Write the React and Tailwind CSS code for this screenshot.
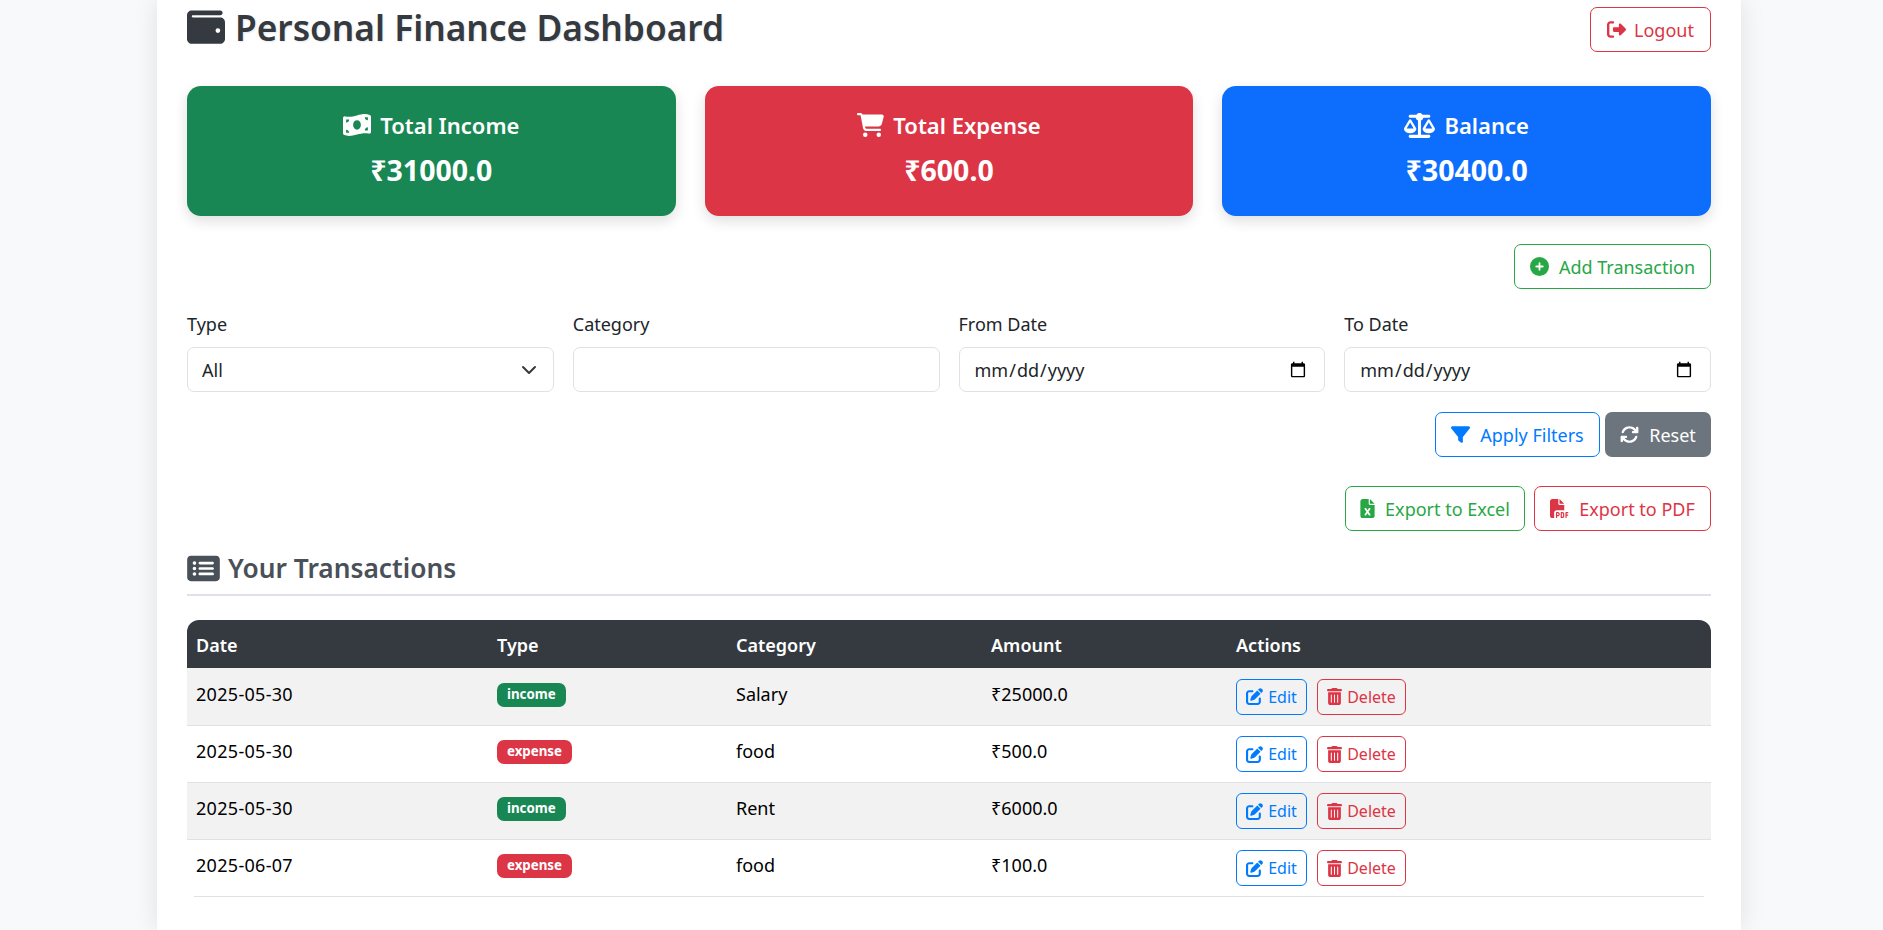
import {
  FaWallet,
  FaMoneyBillWave,
  FaCartShopping,
  FaScaleBalanced,
  FaRightFromBracket,
  FaCirclePlus,
  FaFilter,
  FaArrowsRotate,
  FaFileExcel,
  FaFilePdf,
  FaRectangleList,
  FaPenToSquare,
  FaTrashCan,
} from "react-icons/fa6";

const transacciones = [
  { fecha: "2025-05-30", tipo: "income", categoria: "Salary", monto: "₹25000.0" },
  { fecha: "2025-05-30", tipo: "expense", categoria: "food", monto: "₹500.0" },
  { fecha: "2025-05-30", tipo: "income", categoria: "Rent", monto: "₹6000.0" },
  { fecha: "2025-06-07", tipo: "expense", categoria: "food", monto: "₹100.0" },
];

function SummaryCard({ icon, title, value, color }) {
  return (
    <div className={`${color} h-[130px] rounded-[14px] shadow-[0_5px_14px_rgba(0,0,0,0.13)] text-white flex flex-col items-center pt-[23px]`}>
      <div className="flex items-center gap-[9px] text-[22px] font-semibold leading-[32px]">
        {icon}
        <span>{title}</span>
      </div>
      <div className="text-[28.5px] font-bold leading-[40px] mt-[9px]">{value}</div>
    </div>
  );
}

function Field({ label, children }) {
  return (
    <div>
      <label className="block text-[18px] leading-[28px] mb-[7px] -mt-[2px] pb-[2px] text-[#212529]">{label}</label>
      {children}
    </div>
  );
}

function OutlineButton({ className, icon, children }) {
  return (
    <button className={`${className} h-[45px] flex items-center justify-center border rounded-[7px] bg-white text-[18px]`}>
      {icon}
      <span className="relative top-[1px]">{children}</span>
    </button>
  );
}

function App() {
  const inputClass = "w-full h-[45px] border border-[#dee2e6] rounded-[7px] pl-[14px] pr-[15px] pt-[1px] text-[18px] text-[#212529] bg-white outline-none";

  return (
    <div className="h-[930px] overflow-hidden bg-[#f8f9fa] font-['Noto_Sans',sans-serif]">
      <div className="w-[1584px] h-[930px] ml-[157px] bg-white px-[30px] pt-[7px] shadow-[0_0_24px_rgba(0,0,0,0.1)]">
        {/* Encabezado */}
        <div className="flex justify-between items-start h-[45px] mb-[34px]">
          <h1 className="flex items-center gap-[10px] text-[35.3px] font-semibold leading-[40px] text-[#343a40] [text-shadow:1px_1px_2px_rgba(0,0,0,0.1)]">
            <FaWallet className="w-[38px] h-[38px]" />
            Personal Finance Dashboard
          </h1>
          <OutlineButton
            className="w-[121px] gap-[8px] border-[#dc3545] text-[#dc3545]"
            icon={<FaRightFromBracket className="w-[19px] h-[19px]" />}
          >
            Logout
          </OutlineButton>
        </div>

        {/* Resumen */}
        <div className="grid grid-cols-3 gap-x-[29px]">
          <SummaryCard color="bg-[#198754]" title="Total Income" value="₹31000.0" icon={<FaMoneyBillWave className="w-[28px] h-[28px]" />} />
          <SummaryCard color="bg-[#dc3545]" title="Total Expense" value="₹600.0" icon={<FaCartShopping className="w-[27px] h-[24px]" />} />
          <SummaryCard color="bg-[#0d6efd]" title="Balance" value="₹30400.0" icon={<FaScaleBalanced className="w-[31px] h-[25px]" />} />
        </div>

        <div className="flex justify-end mt-[28px]">
          <OutlineButton
            className="w-[197px] gap-[10px] border-[#28a745] text-[#28a745]"
            icon={<FaCirclePlus className="w-[19px] h-[19px]" />}
          >
            Add Transaction
          </OutlineButton>
        </div>

        {/* Filtros */}
        <div className="grid grid-cols-4 gap-x-[19px] mt-[23px]">
          <Field label="Type">
            <div className="relative">
              <select className={`${inputClass} appearance-none`}>
                <option>All</option>
              </select>
              <svg className="absolute right-[17px] top-[15px] w-[16px] h-[16px] pointer-events-none" viewBox="0 0 16 16" fill="none">
                <path d="m2 5 6 6 6-6" stroke="#343a40" strokeWidth="2" strokeLinecap="round" strokeLinejoin="round" />
              </svg>
            </div>
          </Field>
          <Field label="Category">
            <input type="text" className={inputClass} />
          </Field>
          <Field label="From Date">
            <input type="date" className={inputClass} />
          </Field>
          <Field label="To Date">
            <input type="date" className={inputClass} />
          </Field>
        </div>

        <div className="flex justify-end gap-[5px] mt-[20px]">
          <OutlineButton
            className="w-[165px] gap-[10px] border-[#007bff] text-[#007bff]"
            icon={<FaFilter className="w-[19px] h-[19px]" />}
          >
            Apply Filters
          </OutlineButton>
          <button className="w-[106px] h-[45px] flex items-center justify-center gap-[10px] rounded-[7px] bg-[#6c757d] text-white text-[18px]">
            <FaArrowsRotate className="w-[19px] h-[19px]" />
            <span className="relative top-[1px]">Reset</span>
          </button>
        </div>

        <div className="flex justify-end gap-[9px] mt-[29px]">
          <OutlineButton
            className="w-[180px] gap-[10px] border-[#28a745] text-[#28a745]"
            icon={<FaFileExcel className="w-[15px] h-[19px]" />}
          >
            Export to Excel
          </OutlineButton>
          <OutlineButton
            className="w-[177px] gap-[10px] border-[#dc3545] text-[#dc3545]"
            icon={<FaFilePdf className="w-[19px] h-[19px]" />}
          >
            Export to PDF
          </OutlineButton>
        </div>

        {/* Tabla */}
        <h2 className="flex items-center gap-[8px] h-[65px] pt-[12px] border-b-2 border-[#dee2e6] text-[26.3px] font-semibold text-[#495057]">
          <FaRectangleList className="w-[33px] h-[29px]" />
          Your Transactions
        </h2>

        <table className="w-full table-fixed mt-[24px] text-[18px] text-black text-left">
          <colgroup>
            <col className="w-[301px]" />
            <col className="w-[239px]" />
            <col className="w-[255px]" />
            <col className="w-[245px]" />
            <col />
          </colgroup>
          <thead>
            <tr className="h-[48px] bg-[#343a40] text-white">
              <th className="px-[9px] pt-[2px] font-semibold rounded-tl-[12px]">Date</th>
              <th className="px-[9px] pt-[2px] font-semibold">Type</th>
              <th className="px-[9px] pt-[2px] font-semibold">Category</th>
              <th className="px-[9px] pt-[2px] font-semibold">Amount</th>
              <th className="px-[9px] pt-[2px] font-semibold rounded-tr-[12px]">Actions</th>
            </tr>
          </thead>
          <tbody>
            {transacciones.map((t, i) => (
              <tr key={i} className={`h-[57px] ${i % 2 === 0 ? "bg-[#f2f2f2]" : "bg-white"} ${i < 3 ? "border-b border-[#dee2e6]" : ""}`}>
                <td className="px-[9px] pb-[4px] tracking-[0.3px]">{t.fecha}</td>
                <td className="px-[9px] pb-[3px]">
                  <span className={`flex w-fit items-center h-[24px] px-[10px] rounded-[7px] text-[13.3px] font-bold text-white ${t.tipo === "income" ? "bg-[#198754]" : "bg-[#dc3545]"}`}>
                    {t.tipo}
                  </span>
                </td>
                <td className="px-[9px] pb-[4px]">{t.categoria}</td>
                <td className="px-[9px] pb-[4px]">{t.monto}</td>
                <td className="px-[9px] pt-[1px]">
                  <div className="flex gap-[10px] text-[16px]">
                    <button className="w-[71px] h-[36px] flex items-center justify-center gap-[5px] border border-[#007bff] rounded-[6px] text-[#007bff]">
                      <FaPenToSquare className="w-[17px] h-[17px]" />
                      <span>Edit</span>
                    </button>
                    <button className="w-[89px] h-[36px] flex items-center justify-center gap-[5px] border border-[#dc3545] rounded-[6px] text-[#dc3545]">
                      <FaTrashCan className="w-[15px] h-[17px]" />
                      <span>Delete</span>
                    </button>
                  </div>
                </td>
              </tr>
            ))}
          </tbody>
        </table>
        <div className="mx-[7px] border-b border-[#dee2e6]"></div>
      </div>
    </div>
  );
}

export default App;
